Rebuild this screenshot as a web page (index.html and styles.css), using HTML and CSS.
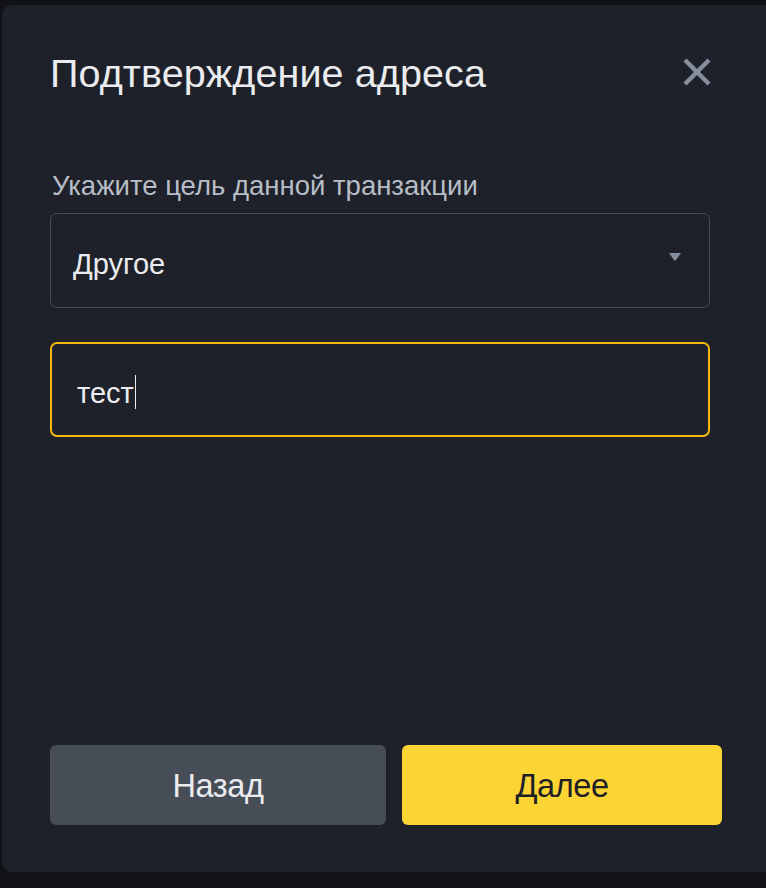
FILE: index.html
```html
<!DOCTYPE html>
<html lang="ru">
<head>
<meta charset="utf-8">
<link rel="stylesheet" href="styles.css">
</head>
<body>
<div class="modal">
  <div class="header">
    <h1 class="title">Подтверждение адреса</h1>
    <button class="close" aria-label="Закрыть">
      <svg width="30" height="30" viewBox="0 0 30 30"><path d="M3 3 L27 27 M27 3 L3 27" stroke="#848e9c" stroke-width="4.5" stroke-linecap="butt"/></svg>
    </button>
  </div>
  <div class="label">Укажите цель данной транзакции</div>
  <div class="select">
    <span class="select-value">Другое</span>
    <svg class="arrow" width="14" height="10" viewBox="0 0 14 10"><path d="M1 1 H13 L8 8 Q7 9.2 6 8 Z" fill="#848e9c"/></svg>
  </div>
  <div class="input"><span class="input-text">тест</span><span class="caret"></span></div>
  <div class="spacer"></div>
  <div class="buttons">
    <button class="btn btn-back">Назад</button>
    <button class="btn btn-next">Далее</button>
  </div>
</div>
</body>
</html>
```
FILE: styles.css
```css
html, body {
  margin: 0;
  padding: 0;
  height: 100%;
  overflow: hidden;
  background: #111216;
  font-family: "Liberation Sans", Arial, sans-serif;
}
body {
  padding: 5px 0 0 2px;
  box-sizing: border-box;
}
.modal {
  width: 780px;
  height: 867px;
  background: #1e2129;
  border-radius: 10px;
  box-sizing: border-box;
  padding: 0 0 0 48px;
  display: flex;
  flex-direction: column;
}
.header {
  width: 662px;
  display: flex;
  align-items: center;
  justify-content: space-between;
  height: 135px;
}
.title {
  margin: 0;
  font-weight: 400;
  font-size: 39.5px;
  color: #eaecef;
  letter-spacing: 0.1px;
  line-height: 46px;
}
.close {
  background: none;
  border: none;
  padding: 0;
  width: 30px;
  height: 30px;
  display: flex;
  transform: translateY(-1px);
}
.label {
  margin: 31px 0 0 2px;
  font-size: 27.5px;
  color: #b7bdc6;
  line-height: 30px;
}
.select {
  margin-top: 12px;
  width: 660px;
  height: 95px;
  box-sizing: border-box;
  border: 1.5px solid #474d57;
  border-radius: 7px;
  display: flex;
  align-items: center;
  justify-content: space-between;
  padding: 0 27px 0 22px;
}
.select-value {
  font-size: 29px;
  color: #eaecef;
  transform: translateY(4px);
}
.arrow {
  display: block;
  transform: translateY(-4px);
}
.input {
  margin-top: 34px;
  width: 660px;
  height: 95px;
  box-sizing: border-box;
  border: 2px solid #f0b90b;
  border-radius: 7px;
  display: flex;
  align-items: center;
  padding: 0 0 0 25px;
}
.input-text {
  font-size: 29px;
  color: #eaecef;
  transform: translateY(4px);
}
.caret {
  display: block;
  width: 1px;
  height: 34px;
  background: #eaecef;
  margin-left: 1px;
  transform: translateY(2px);
}
.spacer {
  flex: 1;
}
.buttons {
  display: flex;
  gap: 16px;
  margin-bottom: 47px;
}
.btn {
  height: 80px;
  border: none;
  border-radius: 6px;
  font-family: "Liberation Sans", Arial, sans-serif;
  font-size: 32.5px;
  letter-spacing: -0.4px;
  padding: 3px 0 0;
}
.btn-back {
  width: 336px;
  background: #474d57;
  color: #eaecef;
}
.btn-next {
  width: 320px;
  background: #fcd535;
  color: #1e2026;
}
```
